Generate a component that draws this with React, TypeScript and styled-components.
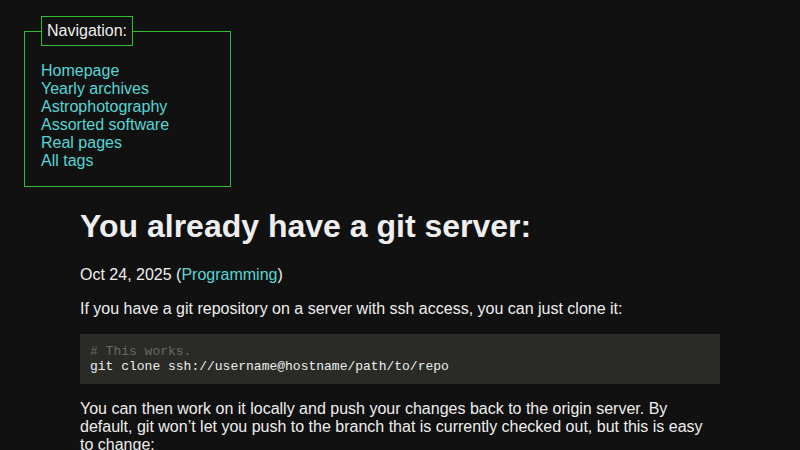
import styled, { createGlobalStyle } from "styled-components";

const GlobalStyle = createGlobalStyle`
  html, body {
    margin: 0;
    background: #111111;
    color: #eeeeee;
    font-family: "Liberation Sans", Arial, sans-serif;
    font-size: 16px;
    line-height: 18px;
  }
  a {
    color: #55d6d4;
    text-decoration: none;
  }
`;

const Page = styled.div`
  padding: 16px 24px 0 24px;
`;

const Nav = styled.fieldset`
  width: 207px;
  box-sizing: border-box;
  margin: 0;
  padding: 16px 16px 16px 16px;
  border: 1px solid #33bb33;
`;

const NavLegend = styled.legend`
  padding: 5px 5px;
  border: 1px solid #33bb33;
  line-height: 18px;
  color: #eeeeee;
`;

const NavList = styled.ul`
  list-style: none;
  margin: 0;
  padding: 0;
`;

const Main = styled.main`
  max-width: 640px;
  margin: 0 auto;
`;

const Title = styled.h1`
  font-size: 32px;
  line-height: 37px;
  font-weight: bold;
  margin: 21px 0;
`;

const Paragraph = styled.p`
  margin: 16px 0;
`;

const Code = styled.pre`
  margin: 16px 0;
  padding: 10px;
  background: #2a2a27;
  font-family: "Liberation Mono", "Courier New", monospace;
  font-size: 13px;
  line-height: 15px;
  color: #eeeeee;
  overflow: hidden;
`;

const Comment = styled.span`
  color: #6b6b63;
`;

const navLinks = [
  "Homepage",
  "Yearly archives",
  "Astrophotography",
  "Assorted software",
  "Real pages",
  "All tags",
];

export default function App() {
  return (
    <Page>
      <GlobalStyle />
      <Nav>
        <NavLegend>Navigation:</NavLegend>
        <NavList>
          {navLinks.map((l) => (
            <li key={l}>
              <a href="#">{l}</a>
            </li>
          ))}
        </NavList>
      </Nav>
      <Main>
        <Title>You already have a git server:</Title>
        <Paragraph>
          Oct 24, 2025 (<a href="#">Programming</a>)
        </Paragraph>
        <Paragraph>
          If you have a git repository on a server with ssh access, you can just clone it:
        </Paragraph>
        <Code>
          <Comment># This works.</Comment>
          {"\n"}git clone ssh://username@hostname/path/to/repo
        </Code>
        <Paragraph>
          You can then work on it locally and push your changes back to the origin server.
          By default, git won’t let you push to the branch that is currently checked out, but
          this is easy to change:
        </Paragraph>
      </Main>
    </Page>
  );
}
